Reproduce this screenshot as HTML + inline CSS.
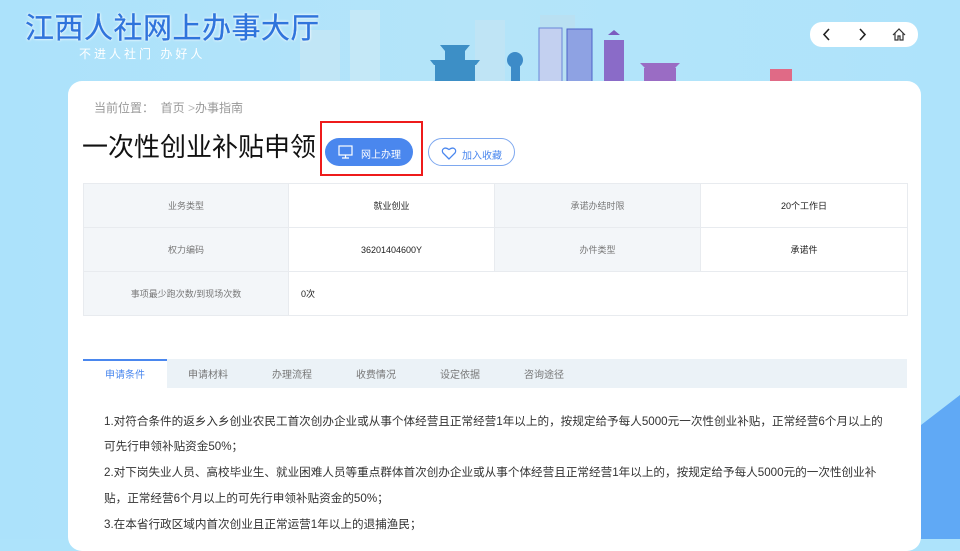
<!DOCTYPE html>
<html><head><meta charset="utf-8"><style>
*{margin:0;padding:0;box-sizing:border-box}
body{width:960px;height:539px;overflow:hidden;position:relative;background:#ade3fb;font-family:"Liberation Sans","Noto Sans CJK SC",sans-serif}
.sky{position:absolute;left:0;top:0;width:960px;height:539px;background:linear-gradient(90deg,#ace2fb 0%,#b4e4f9 50%,#aee3fb 100%)}
.corner{position:absolute;left:921px;top:395px;width:39px;height:144px;background:#60a9f5;clip-path:polygon(0 30px,39px 0,39px 144px,0 144px)}
.bld{position:absolute}
.title{position:absolute;left:25px;top:11px;font-size:29px;line-height:36px;color:#2f74dc;-webkit-text-stroke:0.3px #2f74dc;letter-spacing:0.5px;text-shadow:0 0 2px #fff,0 0 3px #fff}
.sub{position:absolute;left:79px;top:47px;font-size:12px;line-height:14px;color:#fff;letter-spacing:3px}
.nav{position:absolute;left:810px;top:22px;width:108px;height:25px;background:#fff;border-radius:12px}
.card{position:absolute;left:68px;top:81px;width:853px;height:470px;background:#fff;border-radius:14px}
.crumb{position:absolute;left:94px;top:99px;font-size:12px;color:#999}
.h1{position:absolute;left:82px;top:130px;font-size:26px;line-height:34px;color:#111;font-weight:400}
.btn1{position:absolute;left:325px;top:138px;width:88px;height:28px;background:#4a87ee;border-radius:14px;color:#fff;font-size:10px}
.red{position:absolute;left:320px;top:121px;width:103px;height:55px;border:2px solid #ee1b1b}
.btn2{position:absolute;left:428px;top:138px;width:87px;height:28px;border:1px solid #7ea8ef;border-radius:14px;color:#4a87ee;font-size:10px}
table{position:absolute;left:83px;top:183px;width:824px;border-collapse:collapse;font-size:9px;table-layout:fixed}
td{border:1px solid #e8ebef;height:44px;text-align:center;color:#222}
td.l{background:#f3f6f9;color:#777}
.tabs{position:absolute;left:83px;top:359px;width:824px;height:29px;background:#ebf2f7;font-size:10px;color:#777}
.tabs span{position:absolute;top:7px}
.tabs .a{position:absolute;left:0;top:0;width:84px;height:29px;background:#fff;border-top:2px solid #4a87ee}
.txt{position:absolute;left:104px;font-size:11.6px;color:#333;white-space:nowrap}
</style></head><body>
<div class="sky"></div>
<svg class="bld" style="left:290px;top:0" width="340" height="85">
<rect x="10" y="30" width="40" height="55" fill="#c1e6f6"/><rect x="60" y="10" width="30" height="75" fill="#c4e8f7"/><rect x="185" y="20" width="30" height="65" fill="#bfe4f5"/><rect x="250" y="15" width="35" height="70" fill="#b9e0f2"/>
<path d="M150 45h30l-5 6h-20z M155 51h20v34h-20z M140 60h50l-4 5h-42z M145 65h40v20h-40z" fill="#3d8fc6"/>
<circle cx="225" cy="60" r="8" fill="#3d8bc8"/><rect x="221" y="62" width="9" height="23" fill="#3d8bc8"/>
<rect x="249" y="28" width="23" height="57" fill="#c3d0f0" stroke="#6a86d8"/>
<rect x="277" y="29" width="25" height="56" fill="#8ea2e3" stroke="#4c63c8"/>
<path d="M318 35l6 -5 6 5z" fill="#7b5bbf"/><rect x="314" y="40" width="20" height="45" fill="#8a6bc8"/>
</svg>
<svg class="bld" style="left:630px;top:55px" width="170" height="30"><path d="M10 8h40l-5 5h-30zM14 13h32v17h-32z" fill="#9a6cc4"/><rect x="140" y="14" width="22" height="16" fill="#e06a86"/></svg>
<div class="corner"></div>
<div class="title">江西人社网上办事大厅</div>
<div class="sub">不进人社门 办好人</div>
<div class="nav"><svg width="108" height="25"><path d="M19 7l-5 5.5 5 5.5M50 7l5 5.5-5 5.5" stroke="#222" stroke-width="1.6" fill="none"/><path d="M83 13l6-6 6 6M85 11v7h3v-4h2v4h3v-7" stroke="#333" stroke-width="1.2" fill="none"/></svg></div>
<div class="card"></div>
<div class="crumb">当前位置：&nbsp; 首页 <span style="color:#bbb">&gt;</span>办事指南</div>
<div class="h1">一次性创业补贴申领</div>
<div class="red"></div>
<div class="btn1"><svg style="position:absolute;left:13px;top:7px" width="15" height="14"><rect x="1" y="1" width="13" height="9" fill="none" stroke="#fff" stroke-width="1.2"/><path d="M7.5 10v3M4 13h7" stroke="#fff" stroke-width="1.2"/></svg><span style="position:absolute;left:36px;top:8px">网上办理</span></div>
<div class="btn2"><svg style="position:absolute;left:12px;top:7px" width="16" height="14"><path d="M8 13L2 7C0 4 3 0 8 3.5 13 0 16 4 14 7z" fill="none" stroke="#4a87ee" stroke-width="1.3"/></svg><span style="position:absolute;left:33px;top:8px">加入收藏</span></div>
<table>
<colgroup><col style="width:205px"><col style="width:206px"><col style="width:206px"><col style="width:207px"></colgroup>
<tr><td class="l">业务类型</td><td>就业创业</td><td class="l">承诺办结时限</td><td>20个工作日</td></tr>
<tr><td class="l">权力编码</td><td>36201404600Y</td><td class="l">办件类型</td><td>承诺件</td></tr>
<tr><td class="l">事项最少跑次数/到现场次数</td><td colspan="3" style="text-align:left;padding-left:12px">0次</td></tr>
</table>
<div class="tabs"><div class="a"></div>
<span style="left:22px;color:#4a87ee">申请条件</span><span style="left:105px">申请材料</span><span style="left:189px">办理流程</span><span style="left:273px">收费情况</span><span style="left:357px">设定依据</span><span style="left:441px">咨询途径</span></div>
<div class="txt" style="top:413px">1.对符合条件的返乡入乡创业农民工首次创办企业或从事个体经营且正常经营1年以上的，按规定给予每人5000元一次性创业补贴，正常经营6个月以上的</div>
<div class="txt" style="top:438px">可先行申领补贴资金50%；</div>
<div class="txt" style="top:464px">2.对下岗失业人员、高校毕业生、就业困难人员等重点群体首次创办企业或从事个体经营且正常经营1年以上的，按规定给予每人5000元的一次性创业补</div>
<div class="txt" style="top:490px">贴，正常经营6个月以上的可先行申领补贴资金的50%；</div>
<div class="txt" style="top:516px">3.在本省行政区域内首次创业且正常运营1年以上的退捕渔民；</div>
</body></html>
